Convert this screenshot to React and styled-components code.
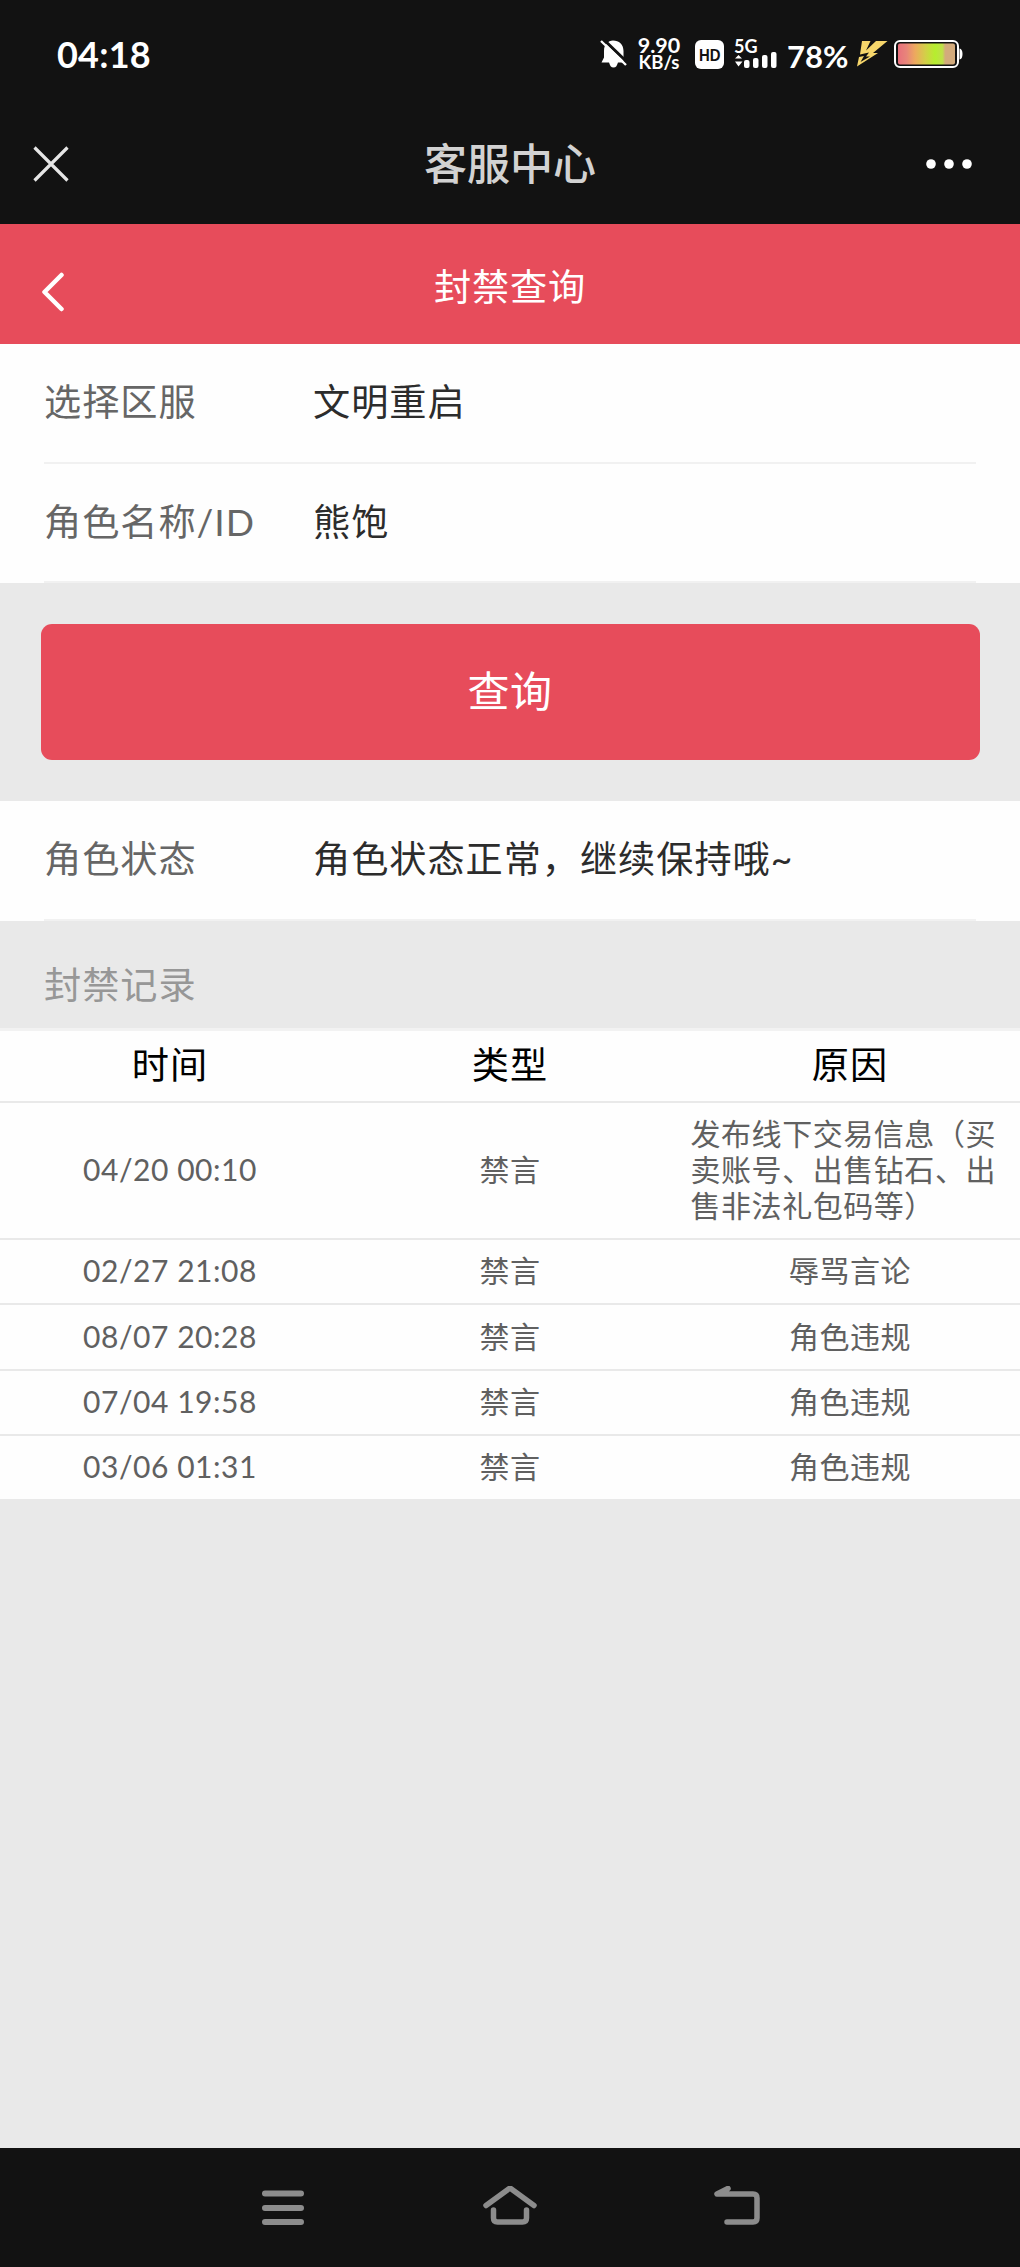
import React from "react";
import styled, { createGlobalStyle } from "styled-components";

const GlobalStyle = createGlobalStyle`
  * {
    box-sizing: border-box;
  }
  body {
    margin: 0;
    background: #e9e9e9;
    font-family: Lato, "Noto Sans CJK SC", sans-serif;
  }
`;

const Screen = styled.div`
  width: 1020px;
  height: 2267px;
  display: flex;
  flex-direction: column;
  background: #e9e9e9;
`;

// 状态栏
const StatusBar = styled.div`
  height: 108px;
  display: flex;
  align-items: center;
  padding: 0 57px;
  background: #121212;
  color: #fff;
`;
const Clock = styled.span`
  font-size: 36px;
  font-weight: 700;
  line-height: 44px;
  letter-spacing: 0.2px;
  margin-right: auto;
`;
const StatusIcons = styled.div`
  display: flex;
  align-items: center;
  height: 30px;
`;
const Speed = styled.div`
  width: 44px;
  margin: 0 14px 0 9px;
  display: flex;
  flex-direction: column;
  align-items: center;
  font-weight: 700;
`;
const SpeedLine = styled.span`
  font-size: ${(props) => props.size}px;
  line-height: 17px;
`;
const SignalIcon = styled.svg`
  margin-left: 10px;
  overflow: visible;
`;
const BatteryIcon = styled.svg`
  margin-left: 6px;
`;
const Percent = styled.span`
  width: 62px;
  margin: 4px 8px 0 9px;
  font-size: 31px;
  font-weight: 700;
  line-height: 36px;
`;

// 标题栏
const TitleBar = styled.div`
  height: 116px;
  padding: 0 46px 4px 33px;
  display: grid;
  grid-template-columns: 80px 1fr 67px;
  align-items: center;
  background: #121212;
`;
const Title = styled.h1`
  margin: 0;
  text-align: center;
  color: #d2d2d2;
  font-size: 43px;
  font-weight: 500;
  line-height: 50px;
`;

const Header = styled.div`
  height: 120px;
  padding: 0 40px;
  display: grid;
  grid-template-columns: 40px 1fr 40px;
  align-items: center;
  background: #e74c5b;
`;
const BackIcon = styled.svg`
  margin-top: 16px;
`;
const HeaderTitle = styled.h2`
  margin: 0;
  padding-top: 6px;
  text-align: center;
  color: #fff;
  font-size: 37.2px;
  font-weight: 400;
  line-height: 50px;
  letter-spacing: 0.8px;
`;

// 表单
const Form = styled.div`
  background: #fefefe;
  padding: 0 44px;
`;
const Field = styled.div`
  display: flex;
  align-items: center;
  height: ${(props) => props.height || 120}px;
  padding-bottom: 2px;
  border-bottom: 2px solid #f1f1f1;
  font-size: 37.2px;
  line-height: 50px;
  letter-spacing: 0.95px;
`;
const Label = styled.span`
  width: 269px;
  color: #666;
`;
const Value = styled.span`
  color: #2c2c2c;
`;
const ButtonArea = styled.div`
  padding: 41px 40.5px;
`;
const QueryButton = styled.button`
  display: block;
  width: 100%;
  height: 136px;
  padding: 0 0 8px;
  border: none;
  border-radius: 11px;
  background: #e74c5b;
  color: #fff;
  font-family: inherit;
  font-size: 42px;
  letter-spacing: 0.5px;
`;

// 封禁记录
const SectionTitle = styled.div`
  height: 107px;
  padding: 39px 44px 0;
  color: #979797;
  font-size: 37.2px;
  line-height: 50px;
  letter-spacing: 0.95px;
`;
const Table = styled.div`
  border-top: 3px solid #f2f2f2;
`;
const Row = styled.div`
  display: grid;
  grid-template-columns: repeat(3, 340px);
  align-items: center;
  height: ${(props) => props.height}px;
  background: #fefefe;
  border-bottom: 2px solid #e9e9e9;
`;
const HeadCell = styled.div`
  padding-bottom: 3px;
  text-align: center;
  color: #000;
  font-size: 37.2px;
  line-height: 50px;
  letter-spacing: 0.95px;
`;
const Cell = styled.div`
  padding: 0 10.5px 3px;
  text-align: center;
  color: #606060;
  font-size: 30px;
  line-height: 36px;
  letter-spacing: 0.55px;
`;
const Reason = styled.span`
  display: inline-block;
  text-align: left;
  vertical-align: top;
`;

// 系统导航
const NavBar = styled.div`
  height: 119px;
  margin-top: auto;
  padding: 0 170px;
  display: grid;
  grid-template-columns: repeat(3, 1fr);
  justify-items: center;
  align-items: center;
  background: #121212;
`;

const records = [
  {
    time: "04/20 00:10",
    type: "禁言",
    reason: "发布线下交易信息（买卖账号、出售钻石、出售非法礼包码等）",
    height: 137,
  },
  { time: "02/27 21:08", type: "禁言", reason: "辱骂言论", height: 65 },
  { time: "08/07 20:28", type: "禁言", reason: "角色违规", height: 66 },
  { time: "07/04 19:58", type: "禁言", reason: "角色违规", height: 65 },
  { time: "03/06 01:31", type: "禁言", reason: "角色违规", height: 65 },
];

function BellOff() {
  return (
    <svg width="28" height="30" viewBox="0 0 28 30">
      <path
        d="M4 12C4 5 8 2 13 1.500C19 1.500 23.500 5.500 23.500 12V23.500H1.500L4 18.500Z"
        fill="#fff"
      />
      <path d="M9 23H18Q17 28.500 13.500 28.500Q10 28.500 9 23Z" fill="#fff" />
      <path d="M2 -1L29 25" stroke="#121212" strokeWidth="3" />
      <path d="M1 2L26 26" stroke="#fff" strokeWidth="2.400" />
    </svg>
  );
}

function HdBadge() {
  return (
    <svg width="29" height="29" viewBox="0 0 29 29">
      <rect width="29" height="29" rx="6" fill="#fff" />
      <text
        x="4"
        y="20.500"
        fontFamily="Liberation Sans"
        fontSize="17"
        fontWeight="700"
        fill="#121212"
        textLength="21.500"
        lengthAdjust="spacingAndGlyphs"
      >
        HD
      </text>
    </svg>
  );
}

function Signal() {
  return (
    <SignalIcon width="44" height="30" viewBox="0 0 44 30">
      <text x="0" y="14" fontSize="18" fontWeight="700" fill="#fff">
        5G
      </text>
      <path d="M1 19.500L4.500 16L8 19.500ZM1 22.500H8.500L4.500 27.500Z" fill="#fff" />
      <g fill="#fff">
        <rect x="10" y="21" width="5.500" height="8" rx="2" />
        <rect x="19" y="19" width="5.500" height="10" rx="2" />
        <rect x="28" y="16" width="5.500" height="13" rx="2" />
        <rect x="37" y="13" width="5.500" height="16" rx="2" />
      </g>
    </SignalIcon>
  );
}

function Bolt() {
  return (
    <svg width="31" height="26" viewBox="0 0 31 26">
      <path
        d="M5 0H13.500L9 9.500L19 0H30.500L16 12H21L0 25.500L2 16L7 15L3.500 21L13 15.500H9L12 11.500L3 13.500Z"
        fill="#f6d66b"
      />
    </svg>
  );
}

function Battery() {
  return (
    <BatteryIcon width="69" height="28" viewBox="0 0 69 28">
      <defs>
        <linearGradient id="charge">
          <stop offset="0" stopColor="#e8707c" />
          <stop offset="0.15" stopColor="#e8857a" />
          <stop offset="0.3" stopColor="#eda95e" />
          <stop offset="0.48" stopColor="#d3cf48" />
          <stop offset="0.65" stopColor="#b6ee2e" />
          <stop offset="0.78" stopColor="#bfe04a" />
          <stop offset="0.83" stopColor="#d3ab7c" />
          <stop offset="1" stopColor="#d3ab7c" />
        </linearGradient>
      </defs>
      <rect x="1" y="1" width="63" height="26" rx="5" fill="none" stroke="#fff" strokeWidth="2" />
      <rect x="4" y="3.500" width="57" height="21" rx="2" fill="url(#charge)" />
      <path d="M65.500 8.500Q68.500 9 68.500 14T65.500 19.500Z" fill="#fff" />
    </BatteryIcon>
  );
}

function App() {
  return (
    <>
      <GlobalStyle />
      <Screen>
        <StatusBar>
          <Clock>04:18</Clock>
          <StatusIcons>
            <BellOff />
            <Speed>
              <SpeedLine size={21.5}>9.90</SpeedLine>
              <SpeedLine size={18.5}>KB/s</SpeedLine>
            </Speed>
            <HdBadge />
            <Signal />
            <Percent>78%</Percent>
            <Bolt />
            <Battery />
          </StatusIcons>
        </StatusBar>

        <TitleBar>
          <svg width="36" height="36" viewBox="0 0 36 36">
            <path
              d="M1.500 1.500L34.500 34.500M34.500 1.500L1.500 34.500"
              stroke="#e6e6e6"
              strokeWidth="3.200"
            />
          </svg>
          <Title>客服中心</Title>
          <svg width="67" height="12" viewBox="0 0 67 12">
            <g fill="#fff">
              <circle cx="24" cy="6" r="4.800" />
              <circle cx="42" cy="6" r="4.800" />
              <circle cx="60" cy="6" r="4.800" />
            </g>
          </svg>
        </TitleBar>

        <Header>
          <BackIcon width="26" height="40" viewBox="0 0 26 40">
            <path
              d="M21.500 3L4.500 20L21.500 37"
              fill="none"
              stroke="#fff"
              strokeWidth="4.500"
              strokeLinecap="round"
              strokeLinejoin="round"
            />
          </BackIcon>
          <HeaderTitle>封禁查询</HeaderTitle>
        </Header>

        <Form>
          <Field>
            <Label>选择区服</Label>
            <Value>文明重启</Value>
          </Field>
          <Field height={119}>
            <Label>角色名称/ID</Label>
            <Value>熊饱</Value>
          </Field>
        </Form>

        <ButtonArea>
          <QueryButton>查询</QueryButton>
        </ButtonArea>

        <Form>
          <Field>
            <Label>角色状态</Label>
            <Value>角色状态正常，继续保持哦~</Value>
          </Field>
        </Form>

        <SectionTitle>封禁记录</SectionTitle>
        <Table>
          <Row height={72}>
            <HeadCell>时间</HeadCell>
            <HeadCell>类型</HeadCell>
            <HeadCell>原因</HeadCell>
          </Row>
          {records.map((record) => (
            <Row key={record.time} height={record.height}>
              <Cell>{record.time}</Cell>
              <Cell>{record.type}</Cell>
              <Cell>
                <Reason>{record.reason}</Reason>
              </Cell>
            </Row>
          ))}
        </Table>

        <NavBar>
          <svg width="46" height="44" viewBox="0 0 46 44">
            <path
              d="M5 7.500H41M5 22H41M5 36H41"
              stroke="#8c8c8c"
              strokeWidth="6"
              strokeLinecap="round"
            />
          </svg>
          <svg width="56" height="44" viewBox="0 0 56 44">
            <path
              d="M4 19.500L28 2L52 19.500M11.500 24V32Q11.500 36 15.500 36H40.500Q44.500 36 44.500 32V24"
              fill="none"
              stroke="#8c8c8c"
              strokeWidth="5.500"
              strokeLinecap="round"
              strokeLinejoin="round"
            />
          </svg>
          <svg width="50" height="44" viewBox="0 0 50 44">
            <path
              d="M16 2.500L5 8H41Q45 8 45 12V32Q45 36 41 36H15"
              fill="none"
              stroke="#8c8c8c"
              strokeWidth="5.500"
              strokeLinecap="round"
              strokeLinejoin="round"
            />
          </svg>
        </NavBar>
      </Screen>
    </>
  );
}

export default App;
